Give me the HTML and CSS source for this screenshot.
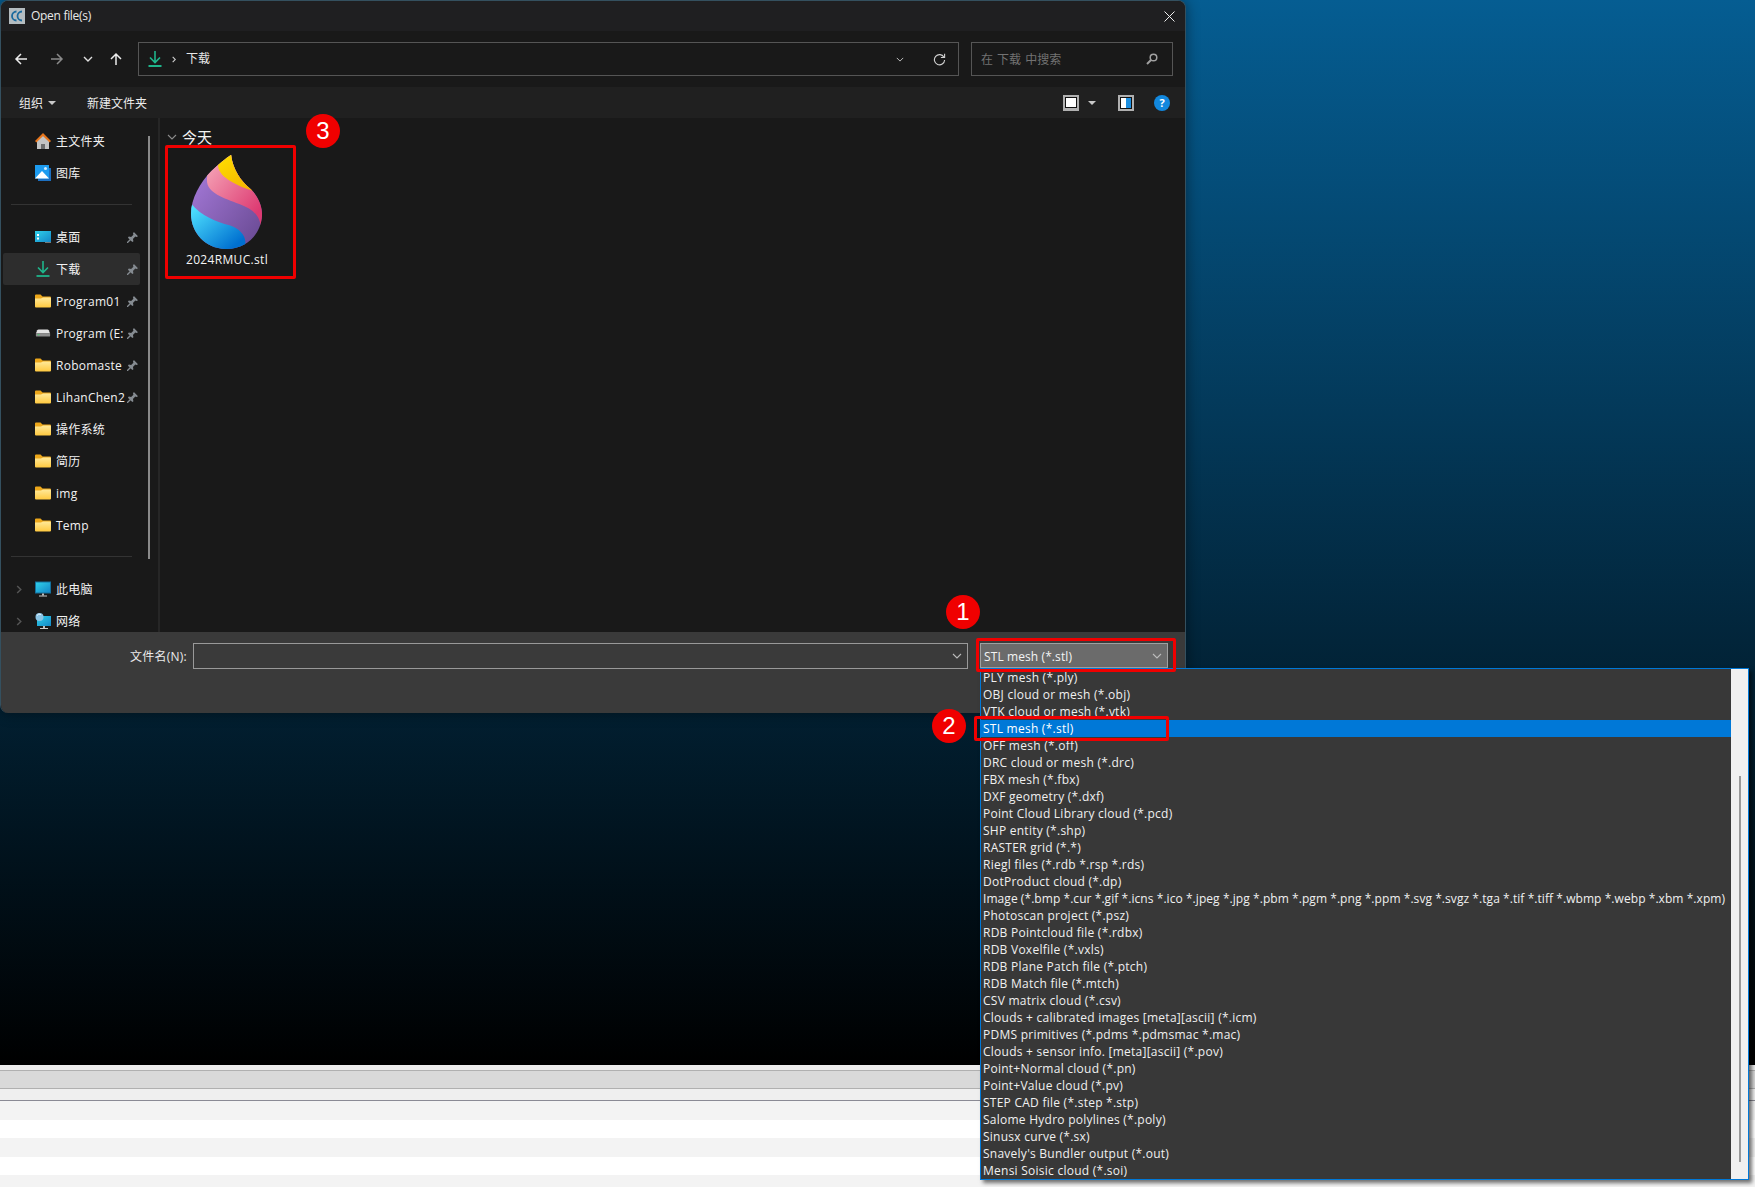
FILE: index.html
```html
<!DOCTYPE html>
<html lang="en">
<head>
    <meta charset="UTF-8">
    <title>Open file(s)</title>
    <link rel="stylesheet" href="styles.css">
</head>
<body>
    <svg class="icon-defs" xmlns="http://www.w3.org/2000/svg">
        <defs>
            <linearGradient id="folderFill" x1="0" y1="0" x2="0" y2="1"><stop offset="0" stop-color="#ffe99a"/><stop offset="1" stop-color="#ffc93f"/></linearGradient>
            <linearGradient id="screenFill" x1="0" y1="0" x2="1" y2="1"><stop offset="0" stop-color="#2fd0ea"/><stop offset="1" stop-color="#1488c8"/></linearGradient>
            <linearGradient id="dropPurple" x1="0" y1="0" x2="1" y2="1"><stop offset="0" stop-color="#b183e6"/><stop offset="1" stop-color="#5f4288"/></linearGradient>
            <linearGradient id="dropPink" x1="0" y1="0" x2="1" y2="1"><stop offset="0.15" stop-color="#f39ab0"/><stop offset="0.8" stop-color="#dd3a72"/></linearGradient>
            <linearGradient id="dropYellow" x1="0" y1="0" x2="1" y2="1"><stop offset="0" stop-color="#ffe100"/><stop offset="1" stop-color="#f2a800"/></linearGradient>
            <linearGradient id="dropBlue" x1="0" y1="0" x2="1" y2="1"><stop offset="0.1" stop-color="#4fe2ff"/><stop offset="0.85" stop-color="#0070d0"/></linearGradient>
            <clipPath id="dropClip"><path d="M245 135C250 180 275 215 305 240C330 265 340 295 339 320C335 380 290 422 230 422C170 422 123 375 123 315C123 270 150 220 185 185C205 165 230 145 245 135Z"/></clipPath>
        </defs>
        <symbol id="i-folder" viewBox="0 0 16 13"><path d="M0 1a1 1 0 0 1 1-1h4.500l2 2H15a1 1 0 0 1 1 1v2H0z" fill="#eda71a"/><path d="M0 4h6l2-1h7a1 1 0 0 1 1 1v8a1 1 0 0 1-1 1H1a1 1 0 0 1-1-1z" fill="url(#folderFill)"/></symbol>
        <symbol id="i-home" viewBox="0 0 16 16"><path d="M2 8l6-5.500L14 8v8H2z" fill="#c4c4c4"/><path d="M6 11h4v5H6z" fill="#6e6e6e"/><path d="M0 8l8-8 8 8-1.400 1.400L8 3 1.400 9.400z" fill="#e8761c"/></symbol>
        <symbol id="i-gallery" viewBox="0 0 16 16"><path d="M3 3h13v13H3z" fill="#1c6fc0"/><path d="M0 0h14v13.500H0z" fill="#1d9cf0"/><path d="M0 13.500L7 6l7 7.500z" fill="#fff"/><circle cx="10.500" cy="3.500" r="1.500" fill="#cfeaff"/></symbol>
        <symbol id="i-desktop" viewBox="0 0 16 12"><path d="M0 0h16v11H0z" fill="url(#screenFill)"/><path d="M2 3h2v2H2zM2 6.500h2v2H2z" fill="#fff"/><path d="M10 11h6v1h-6z" fill="#777"/></symbol>
        <symbol id="i-download" viewBox="0 0 16 16"><path d="M8 0v11M3 6.500L8 11.500l5-5" fill="none" stroke="#1fb58b" stroke-width="1.600"/><path d="M1.500 15h13" stroke="#1fb58b" stroke-width="1.800"/></symbol>
        <symbol id="i-pin" viewBox="0 0 12 12"><path d="M7.500 0L12 4.500 10.500 5.500 9 5 6.500 7.500 7 10 5.800 11 1 6.200 2 5 4.500 5.500 7 3 6.500 1.500zM3 8l1 1-3 3H0v-1z" fill="#858b91"/></symbol>
        <symbol id="i-drive" viewBox="-1 -1 18 10"><path d="M3 0h10q1 0 1.500 1L16 4.500H0L1.500 1Q2 0 3 0z" fill="#e4e4e4"/><path d="M0 4.500h16V7a1 1 0 0 1-1 1H1a1 1 0 0 1-1-1z" fill="#8e8e8e"/><path d="M2 5.500h2v1H2z" fill="#3ddc6a"/></symbol>
        <symbol id="i-pc" viewBox="0 0 16 15"><path d="M0 0h16v12H0z" fill="#14709e"/><path d="M1 1h14v10H1z" fill="url(#screenFill)"/><path d="M7 12h2v2H7z" fill="#bbb"/><path d="M4 14h8v1H4z" fill="#ccc"/></symbol>
        <symbol id="i-net" viewBox="0 0 16 16"><path d="M2 3h14v10H2z" fill="url(#screenFill)"/><path d="M8 13h2v2H8z" fill="#bbb"/><path d="M5 15h8v1H5z" fill="#ccc"/><circle cx="4.500" cy="4" r="4" fill="#8cc4e4"/><path d="M2 2.500a3 3 0 0 1 4-1" stroke="#eaf6ff" fill="none"/></symbol>
        <symbol id="i-chev" viewBox="0 0 10 6"><path d="M1 1l4 4 4-4" fill="none" stroke="currentColor" stroke-width="1.100"/></symbol>
        <symbol id="i-chev-r" viewBox="0 0 6 10"><path d="M1 1l4 4-4 4" fill="none" stroke="currentColor" stroke-width="1.600"/></symbol>
    </svg>

    <div class="desktop">
        <div class="wallpaper"></div>
        <div class="app-edge"></div>
        <div class="app-bar"></div>
        <div class="app-gap"></div>
        <div class="app-row odd"></div>
        <div class="app-row"></div>
        <div class="app-row odd"></div>
        <div class="app-row"></div>
        <div class="app-row odd last"></div>
    </div>

    <div class="dialog">
        <div class="titlebar">
            <svg class="app-icon" viewBox="0 0 16 16"><path d="M0 0h16v16H0z" fill="#b4bcc0"/><path d="M7.500 3.500A4.500 4.500 0 1 0 7.500 12.500M13 3.500A4.500 4.500 0 1 0 13 12.500" fill="none" stroke="#1a6a9e" stroke-width="1.800"/></svg>
            <span class="title-text">Open file(s)</span>
            <svg class="close-icon" viewBox="0 0 11 11"><path d="M.5.500l10 10M10.500.500l-10 10" stroke="#eee" stroke-width="1"/></svg>
        </div>

        <div class="nav-row">
            <div class="nav-buttons">
                <svg class="nav-btn" viewBox="0 0 14 14"><path d="M13 7H2M7 2L2 7l5 5" fill="none" stroke="#ececec" stroke-width="1.500"/></svg>
                <svg class="nav-btn forward" viewBox="0 0 14 14"><path d="M1 7h11M7 2l5 5-5 5" fill="none" stroke="#8a8a8a" stroke-width="1.500"/></svg>
                <svg class="nav-small" viewBox="0 0 10 6"><path d="M1 1l4 4 4-4" fill="none" stroke="#e0e0e0" stroke-width="1.400"/></svg>
                <svg class="nav-btn up" viewBox="0 0 14 14"><path d="M7 13V2M2 7l5-5 5 5" fill="none" stroke="#ececec" stroke-width="1.500"/></svg>
            </div>
            <div class="address">
                <svg class="icon16"><use href="#i-download"/></svg>
                <svg class="crumb-sep"><use href="#i-chev-r"/></svg>
                <span class="crumb">下载</span>
                <svg class="addr-chev"><use href="#i-chev"/></svg>
                <svg class="refresh" viewBox="0 0 14 14"><path d="M11.800 4.500A5.500 5.500 0 1 0 12.500 7.500" fill="none" stroke="#d0d0d0" stroke-width="1.200"/><path d="M8.500 4.800h4v-4" fill="none" stroke="#d0d0d0" stroke-width="1.200"/></svg>
            </div>
            <div class="search">
                <span class="search-hint">在 下载 中搜索</span>
                <svg class="search-icon" viewBox="0 0 12 12"><circle cx="7.500" cy="4.500" r="3.300" fill="none" stroke="#a0a0a0" stroke-width="1.500"/><path d="M5 7L1 11" stroke="#a0a0a0" stroke-width="2"/></svg>
            </div>
        </div>

        <div class="toolbar">
            <span class="tool-label">组织</span>
            <span class="tri organize-tri"></span>
            <span class="tool-label new-folder">新建文件夹</span>
            <div class="tool-right">
                <span class="view-icon"></span>
                <span class="tri view-tri"></span>
                <span class="pane-icon"><span class="pane-side"></span></span>
                <span class="help-icon">?</span>
            </div>
        </div>

        <div class="main">
            <div class="sidebar">
                <div class="nav-item"><svg class="icon16"><use href="#i-home"/></svg><span class="nav-name">主文件夹</span></div>
                <div class="nav-item"><svg class="icon16"><use href="#i-gallery"/></svg><span class="nav-name">图库</span></div>
                <div class="nav-sep"></div>
                <div class="nav-item"><svg class="icon16"><use href="#i-desktop"/></svg><span class="nav-name">桌面</span><svg class="pin"><use href="#i-pin"/></svg></div>
                <div class="nav-item selected"><svg class="icon16"><use href="#i-download"/></svg><span class="nav-name">下载</span><svg class="pin"><use href="#i-pin"/></svg></div>
                <div class="nav-item"><svg class="icon16"><use href="#i-folder"/></svg><span class="nav-name">Program01</span><svg class="pin"><use href="#i-pin"/></svg></div>
                <div class="nav-item"><svg class="icon16"><use href="#i-drive"/></svg><span class="nav-name">Program (E:</span><svg class="pin"><use href="#i-pin"/></svg></div>
                <div class="nav-item"><svg class="icon16"><use href="#i-folder"/></svg><span class="nav-name">Robomaste</span><svg class="pin"><use href="#i-pin"/></svg></div>
                <div class="nav-item"><svg class="icon16"><use href="#i-folder"/></svg><span class="nav-name">LihanChen2</span><svg class="pin"><use href="#i-pin"/></svg></div>
                <div class="nav-item"><svg class="icon16"><use href="#i-folder"/></svg><span class="nav-name">操作系统</span></div>
                <div class="nav-item"><svg class="icon16"><use href="#i-folder"/></svg><span class="nav-name">简历</span></div>
                <div class="nav-item"><svg class="icon16"><use href="#i-folder"/></svg><span class="nav-name">img</span></div>
                <div class="nav-item"><svg class="icon16"><use href="#i-folder"/></svg><span class="nav-name">Temp</span></div>
                <div class="nav-sep"></div>
                <div class="nav-item"><svg class="expander"><use href="#i-chev-r"/></svg><svg class="icon16"><use href="#i-pc"/></svg><span class="nav-name">此电脑</span></div>
                <div class="nav-item"><svg class="expander"><use href="#i-chev-r"/></svg><svg class="icon16"><use href="#i-net"/></svg><span class="nav-name">网络</span></div>
            </div>
            <div class="side-scroll"><div class="side-thumb"></div></div>
            <div class="side-divider"></div>
            <div class="files">
                <div class="group-head">
                    <svg class="group-chev"><use href="#i-chev"/></svg>
                    <span class="group-name">今天</span>
                </div>
                <div class="file-tile">
                    <svg class="drop" viewBox="120 130 225 295">
                        <g clip-path="url(#dropClip)">
                            <rect x="110" y="120" width="250" height="320" fill="url(#dropPurple)"/>
                            <path d="M172 205C165 250 220 265 270 285C310 300 335 320 335 360L360 360L360 130L172 130Z" fill="url(#dropPink)"/>
                            <path d="M205 165C205 200 250 225 310 245L360 130L205 130Z" fill="url(#dropYellow)"/>
                            <path d="M120 280C150 320 200 340 240 350C270 360 292 380 288 410L288 430L110 430Z" fill="url(#dropBlue)"/>
                        </g>
                    </svg>
                    <span class="file-name">2024RMUC.stl</span>
                </div>
            </div>
        </div>

        <div class="footer">
            <span class="field-label">文件名(N):</span>
            <div class="name-input"><svg class="field-chev"><use href="#i-chev"/></svg></div>
            <div class="filter-combo"><span>STL mesh (*.stl)</span><svg class="field-chev"><use href="#i-chev"/></svg></div>
        </div>
    </div>

    <div class="popup">
        <div class="popup-list">
            <div class="popup-row">PLY mesh (*.ply)</div>
            <div class="popup-row">OBJ cloud or mesh (*.obj)</div>
            <div class="popup-row">VTK cloud or mesh (*.vtk)</div>
            <div class="popup-row current">STL mesh (*.stl)</div>
            <div class="popup-row">OFF mesh (*.off)</div>
            <div class="popup-row">DRC cloud or mesh (*.drc)</div>
            <div class="popup-row">FBX mesh (*.fbx)</div>
            <div class="popup-row">DXF geometry (*.dxf)</div>
            <div class="popup-row">Point Cloud Library cloud (*.pcd)</div>
            <div class="popup-row">SHP entity (*.shp)</div>
            <div class="popup-row">RASTER grid (*.*)</div>
            <div class="popup-row">Riegl files (*.rdb *.rsp *.rds)</div>
            <div class="popup-row">DotProduct cloud (*.dp)</div>
            <div class="popup-row many-ext">Image (*.bmp *.cur *.gif *.icns *.ico *.jpeg *.jpg *.pbm *.pgm *.png *.ppm *.svg *.svgz *.tga *.tif *.tiff *.wbmp *.webp *.xbm *.xpm)</div>
            <div class="popup-row">Photoscan project (*.psz)</div>
            <div class="popup-row">RDB Pointcloud file (*.rdbx)</div>
            <div class="popup-row">RDB Voxelfile (*.vxls)</div>
            <div class="popup-row">RDB Plane Patch file (*.ptch)</div>
            <div class="popup-row">RDB Match file (*.mtch)</div>
            <div class="popup-row">CSV matrix cloud (*.csv)</div>
            <div class="popup-row">Clouds + calibrated images [meta][ascii] (*.icm)</div>
            <div class="popup-row">PDMS primitives (*.pdms *.pdmsmac *.mac)</div>
            <div class="popup-row">Clouds + sensor info. [meta][ascii] (*.pov)</div>
            <div class="popup-row">Point+Normal cloud (*.pn)</div>
            <div class="popup-row">Point+Value cloud (*.pv)</div>
            <div class="popup-row">STEP CAD file (*.step *.stp)</div>
            <div class="popup-row">Salome Hydro polylines (*.poly)</div>
            <div class="popup-row">Sinusx curve (*.sx)</div>
            <div class="popup-row">Snavely's Bundler output (*.out)</div>
            <div class="popup-row">Mensi Soisic cloud (*.soi)</div>
        </div>
        <div class="popup-track"><div class="popup-thumb"></div></div>
    </div>

    <!-- numbered red callouts drawn over the screenshot -->
    <div class="callout-box box-file"></div>
    <div class="callout-box box-combo"></div>
    <div class="callout-box box-row"></div>
    <div class="callout-dot dot-1">1</div>
    <div class="callout-dot dot-2">2</div>
    <div class="callout-dot dot-3">3</div>
</body>
</html>
```

FILE: styles.css
```css
/* desktop behind the dialog */
html, body {
    margin: 0;
    padding: 0;
    height: 100%;
    overflow: hidden;
    background: #fff;
    font-family: "Open Sans", "Noto Sans CJK SC", sans-serif;
    font-size: 12px;
}

.icon-defs {
    display: block;
    width: 0;
    height: 0;
}

.desktop {
    display: flex;
    flex-direction: column;
    height: 1187px;
}

.wallpaper {
    height: 1066px;
    background: linear-gradient(180deg, #055d92 0%, #000 100%);
}

.app-edge {
    height: 5px;
    background: #eee;
}

.app-bar {
    height: 17px;
    background: #d9d9d9;
    border-top: 1px solid #b0b0b0;
    border-bottom: 1px solid #b0b0b0;
}

.app-gap {
    height: 11px;
    background: #efefef;
    border-bottom: 1px solid #8a8a94;
}

.app-row {
    height: 18px;
    background: #fff;
}

.app-row.odd {
    height: 19px;
    background: #f3f3f3;
}

.app-row.last {
    height: 12px;
}

/* file dialog */
.dialog {
    position: absolute;
    left: 0;
    top: 0;
    width: 1186px;
    height: 713px;
    box-sizing: border-box;
    display: flex;
    flex-direction: column;
    border: 1px solid #34505f;
    border-bottom: none;
    border-radius: 8px;
    overflow: hidden;
    background: #191919;
    color: #f0f0f0;
    box-shadow: 0 0 14px rgba(0, 0, 0, 0.45);
}

.titlebar {
    height: 30px;
    flex: none;
    display: flex;
    align-items: center;
    padding: 0 8px;
    background: #1f1f21;
}

.app-icon {
    width: 16px;
    height: 16px;
    margin-right: 6px;
}

.title-text {
    margin-bottom: 2px;
    letter-spacing: -0.3px;
    color: #e8e8e8;
}

.close-icon {
    width: 11px;
    height: 11px;
    margin-left: auto;
    margin-right: 2px;
}

.nav-row {
    height: 56px;
    flex: none;
    display: flex;
    align-items: center;
    gap: 12px;
    padding-right: 12px;
    background: #191919;
}

.nav-buttons {
    width: 125px;
    flex: none;
    display: flex;
    align-items: center;
    padding-left: 13px;
    box-sizing: border-box;
}

.nav-btn {
    width: 14px;
    height: 14px;
}

.nav-btn.forward {
    margin-left: 22px;
}

.nav-small {
    width: 10px;
    height: 6px;
    margin-left: 19px;
}

.nav-btn.up {
    margin-left: 16px;
}

.address {
    flex: 1;
    height: 34px;
    box-sizing: border-box;
    display: flex;
    align-items: center;
    border: 1px solid #555;
    padding-left: 8px;
}

.icon16 {
    width: 16px;
    height: 16px;
    flex: none;
}

.crumb-sep {
    width: 4px;
    height: 7px;
    margin-left: 9px;
    color: #d0d0d0;
}

.crumb {
    margin-left: 10px;
    margin-bottom: 2px;
    color: #e8e8e8;
}

.addr-chev {
    width: 8px;
    height: 5px;
    margin-left: auto;
    color: #d0d0d0;
}

.refresh {
    width: 13px;
    height: 13px;
    margin-left: 29px;
    margin-right: 12px;
}

.search {
    width: 202px;
    height: 34px;
    box-sizing: border-box;
    flex: none;
    display: flex;
    align-items: center;
    justify-content: space-between;
    border: 1px solid #555;
    padding: 0 14px 0 9px;
}

.search-hint {
    word-spacing: 1px;
    color: #727272;
}

.search-icon {
    width: 12px;
    height: 12px;
}

.toolbar {
    height: 31px;
    flex: none;
    display: flex;
    align-items: center;
    padding: 0 15px 0 18px;
    background: #202020;
}

.tool-label {
    color: #ececec;
}

.tri {
    width: 0;
    height: 0;
    border-left: 4px solid transparent;
    border-right: 4px solid transparent;
    border-top: 4px solid #c8c8c8;
}

.organize-tri {
    margin-left: 5px;
}

.new-folder {
    margin-left: 31px;
}

.tool-right {
    display: flex;
    align-items: center;
    margin-left: auto;
}

.view-icon {
    width: 16px;
    height: 16px;
    box-sizing: border-box;
    border: 2px solid #b0b0b0;
    border-bottom-width: 3px;
    background: #fff;
    box-shadow: inset 0 0 0 1px #111;
}

.view-tri {
    margin-left: 9px;
}

.pane-icon {
    width: 16px;
    height: 16px;
    box-sizing: border-box;
    display: flex;
    justify-content: flex-end;
    margin-left: 22px;
    border: 2px solid #b0b0b0;
    background: #fff;
    box-shadow: inset 0 0 0 1px #111;
}

.pane-side {
    width: 6px;
    box-sizing: border-box;
    border: solid #111;
    border-width: 1px 1px 1px 0;
    background: #1c8fe0;
}

.help-icon {
    width: 16px;
    height: 16px;
    margin-left: 20px;
    border-radius: 50%;
    background: #1288de;
    color: #fff;
    font-size: 11px;
    font-weight: 700;
    line-height: 16px;
    text-align: center;
}

.main {
    flex: 1;
    min-height: 0;
    display: flex;
    background: #191919;
}

/* left navigation tree */
.sidebar {
    width: 147px;
    flex: none;
    box-sizing: border-box;
    padding-top: 7px;
    overflow: hidden;
}

.nav-item {
    height: 32px;
    box-sizing: border-box;
    display: flex;
    align-items: center;
    padding-left: 32px;
    margin-left: 2px;
    width: 137px;
    position: relative;
    border-radius: 2px;
}

.nav-item.selected {
    background: #2d2d2d;
}

.nav-name {
    width: 68px;
    flex: none;
    margin-left: 5px;
    white-space: nowrap;
    letter-spacing: 0.25px;
    color: #f2f2f2;
}

.pin {
    width: 11px;
    height: 11px;
    flex: none;
    margin-left: 3px;
}

.expander {
    position: absolute;
    left: 13px;
    top: 12px;
    width: 6px;
    height: 9px;
    color: #555;
}

.nav-sep {
    height: 32px;
    box-sizing: border-box;
    margin-left: 10px;
    width: 121px;
    padding-top: 15px;
    background: linear-gradient(#333, #333) 0 15px / 100% 1px no-repeat;
}

.side-scroll {
    width: 2px;
    flex: none;
    padding-top: 18px;
}

.side-thumb {
    height: 423px;
    background: #8a8a8a;
}

.side-divider {
    width: 2px;
    flex: none;
    margin-left: 8px;
    background: #262626;
}

/* file pane */
.files {
    flex: 1;
    padding-left: 5px;
}

.group-head {
    height: 27px;
    display: flex;
    align-items: center;
    padding: 10px 0 0 2px;
    box-sizing: border-box;
}

.group-chev {
    width: 10px;
    height: 6px;
    color: #8a8a8a;
}

.group-name {
    margin-left: 5px;
    font-size: 15px;
    color: #f4f4f4;
}

.file-tile {
    width: 124px;
    display: flex;
    flex-direction: column;
    align-items: center;
    padding-top: 8px;
}

.drop {
    width: 74px;
    height: 97px;
}

.file-name {
    margin-top: 1px;
    letter-spacing: 0.33px;
    color: #f4f4f4;
}

.footer {
    height: 81px;
    flex: none;
    display: flex;
    align-items: flex-start;
    padding-top: 11px;
    box-sizing: border-box;
    background: #3a3a3a;
}

.field-label {
    width: 188px;
    box-sizing: border-box;
    text-align: right;
    line-height: 27px;
    padding-right: 2px;
    letter-spacing: 0.25px;
    color: #eaeaea;
}

.name-input {
    width: 775px;
    height: 26px;
    box-sizing: border-box;
    display: flex;
    align-items: center;
    justify-content: flex-end;
    padding-right: 5px;
    border: 1px solid #999;
    background: #3a3a3a;
    margin-left: 4px;
}

.field-chev {
    width: 10px;
    height: 6px;
    color: #bbb;
}

.filter-combo {
    width: 188px;
    height: 25px;
    box-sizing: border-box;
    display: flex;
    align-items: center;
    justify-content: space-between;
    margin-left: 12px;
    padding: 1px 5px 0 3px;
    border: 1px solid #a0a0a0;
    background: #6b6b6b;
    letter-spacing: 0.1px;
    color: #f4f4f4;
}

/* combo box popup, sits over the dialog */
.popup {
    position: absolute;
    left: 980px;
    top: 668px;
    width: 769px;
    height: 512px;
    box-sizing: border-box;
    display: flex;
    border: 1px solid #0078d7;
    background: #383838;
    box-shadow: 3px 3px 4px rgba(0, 0, 0, 0.55);
}

.popup-list {
    flex: 1;
    min-width: 0;
}

.popup-row {
    height: 17px;
    padding-left: 2px;
    line-height: 17px;
    white-space: nowrap;
    letter-spacing: 0.25px;
    color: #f0f0f0;
}

.popup-row.many-ext {
    letter-spacing: 0.06px;
}

.popup-row.current {
    background: #0078d7;
    color: #fff;
}

.popup-track {
    width: 17px;
    flex: none;
    box-sizing: border-box;
    display: flex;
    justify-content: center;
    padding: 107px 0 17px;
    background: #f0f0f0;
}

.popup-thumb {
    width: 2px;
    background: #999;
}

/* red annotations */
.callout-box {
    position: absolute;
    box-sizing: border-box;
    border: 3px solid #f00000;
    border-radius: 2px;
}

.box-file {
    left: 165px;
    top: 145px;
    width: 131px;
    height: 134px;
}

.box-combo {
    left: 976px;
    top: 638px;
    width: 200px;
    height: 34px;
}

.box-row {
    left: 974px;
    top: 716px;
    width: 195px;
    height: 25px;
}

.callout-dot {
    position: absolute;
    width: 34px;
    height: 34px;
    border-radius: 50%;
    background: #f00000;
    color: #fff;
    font-family: "Liberation Sans", sans-serif;
    font-size: 24px;
    line-height: 34px;
    text-align: center;
}

.dot-1 {
    left: 946px;
    top: 595px;
}

.dot-2 {
    left: 932px;
    top: 709px;
}

.dot-3 {
    left: 306px;
    top: 114px;
}
```
